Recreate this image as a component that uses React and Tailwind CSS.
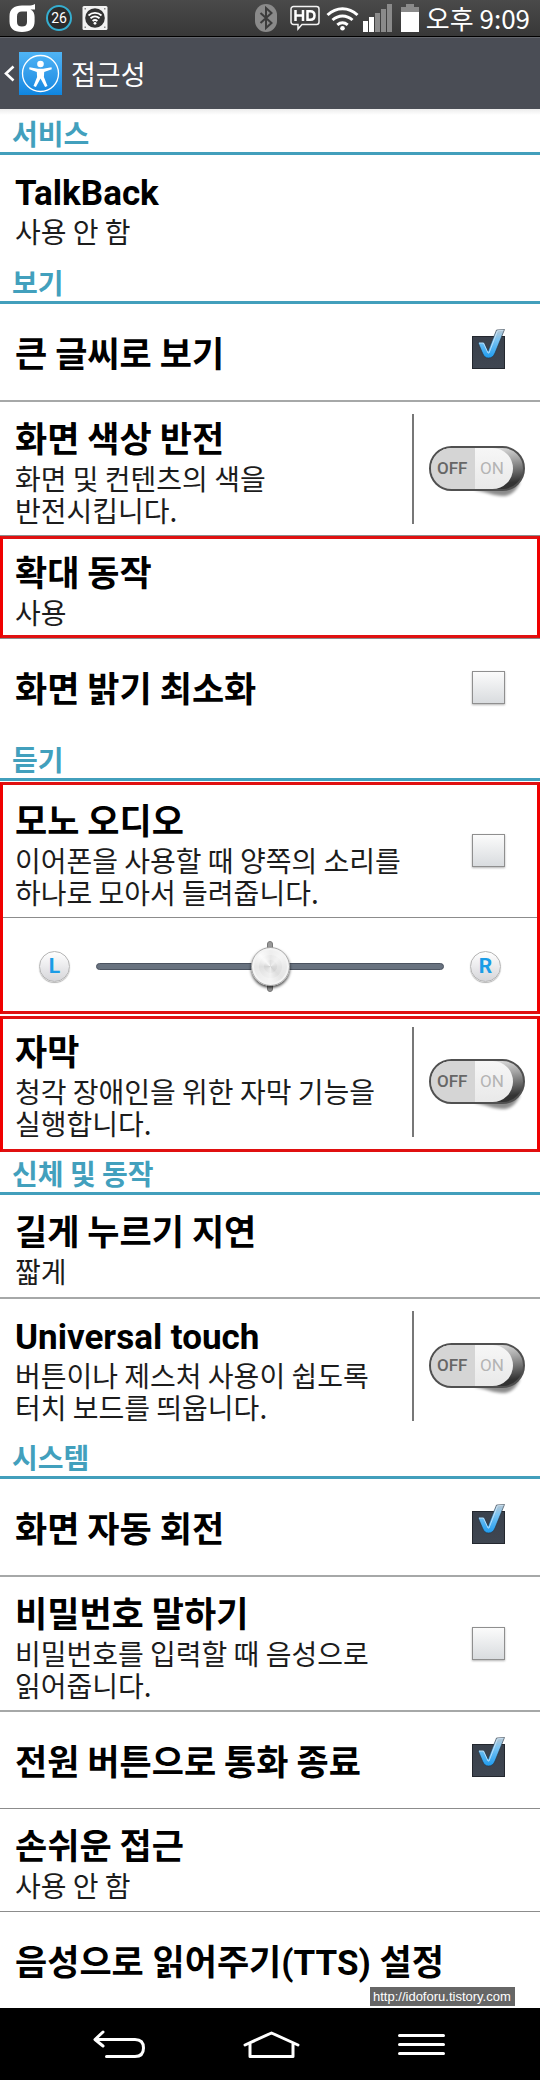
import React, { useId, useState } from 'react';
import clsx from 'clsx';

const SECTIONS = [
	{
		title: '서비스',
		rows: [{ title: 'TalkBack', summary: '사용 안 함', latin: true, divider: 'hidden' }],
	},
	{
		title: '보기',
		rows: [
			{ title: '큰 글씨로 보기', control: 'checkbox', on: true, divider: 'thick' },
			{
				title: '화면 색상 반전',
				summary: '화면 및 컨텐츠의 색을\n반전시킵니다.',
				control: 'switch',
				divider: 'thin',
			},
			{ title: '확대 동작', summary: '사용', divider: 'thin', highlight: 'top-0 bottom-px' },
			{ title: '화면 밝기 최소화', control: 'checkbox' },
		],
	},
	{
		title: '듣기',
		rows: [
			{
				title: '모노 오디오',
				summary: '이어폰을 사용할 때 양쪽의 소리를\n하나로 모아서 들려줍니다.',
				control: 'checkbox',
				divider: 'thin',
				highlight: 'inset-y-px',
				balance: true,
			},
			{
				title: '자막',
				summary: '청각 장애인을 위한 자막 기능을\n실행합니다.',
				control: 'switch',
				divider: 'hidden',
				highlight: 'top-px -bottom-[3px]',
			},
		],
	},
	{
		title: '신체 및 동작',
		rows: [
			{ title: '길게 누르기 지연', summary: '짧게', divider: 'thick' },
			{
				title: 'Universal touch',
				summary: '버튼이나 제스처 사용이 쉽도록\n터치 보드를 띄웁니다.',
				latin: true,
				control: 'switch',
				divider: 'hidden',
			},
		],
	},
	{
		title: '시스템',
		rows: [
			{ title: '화면 자동 회전', control: 'checkbox', on: true, divider: 'thick' },
			{
				title: '비밀번호 말하기',
				summary: '비밀번호를 입력할 때 음성으로\n읽어줍니다.',
				control: 'checkbox',
				divider: 'thick',
			},
			{ title: '전원 버튼으로 통화 종료', control: 'checkbox', on: true, divider: 'thin' },
			{ title: '손쉬운 접근', summary: '사용 안 함', divider: 'thin' },
			{ title: '음성으로 읽어주기(TTS) 설정', latin: true },
		],
	},
];

const DIVIDERS = {
	hidden: 'border-b border-transparent',
	thin: 'border-b border-[#8c8c8c]',
	thick: 'border-b-2 border-[#a6a8a8]',
};

// indexed by the number of summary lines
const HEIGHTS = ['min-h-[96px]', 'min-h-[102px]', 'min-h-[133px]'];

const StatusBar = () => (
	<div className="flex h-[37px] items-center border-b border-black bg-linear-to-b from-[#4a4a4a] to-[#383838] pr-[10px] pl-[9px] text-white">
		<svg className="h-[28px] w-[26px]" viewBox="0 0 26 28" fill="none">
			<path
				d="M26 0v5.500h-4.500c3 1.500 4.100 4.300 4.100 7.500v4.500C25.600 24 21.500 28 13 28S.5 24 .5 17.500v-5C.5 5 5 1.500 13 1.500h6c3 0 5-.5 7-1.500zM13 7.500c-3.300 0-5 1.800-5 5v5.500c0 3.200 1.700 4.500 5 4.500s5-1.300 5-4.500V7.500z"
				fill="#fff"
				fillRule="evenodd"
			/>
		</svg>
		<span className="ml-[11px] grid size-[26px] place-items-center rounded-full border-2 border-[#35aed0] bg-[#2b2b2b] font-['Roboto',sans-serif] text-[14px] leading-none">
			26
		</span>
		<svg className="ml-[10px] size-[26px]" viewBox="0 0 26 26" fill="none">
			<rect x="0.500" y="1" width="25" height="24" rx="1.500" fill="#f2f2f2" />
			<circle cx="13" cy="13" r="9.800" fill="#333" />
			<path d="M6.500 10.500c3.800-3.400 9.200-3.400 13 0M8.500 13.300c2.700-2.300 6.300-2.300 9 0M10.600 16c1.500-1.200 3.300-1.200 4.800 0" stroke="#fff" strokeWidth="1.800" />
			<circle cx="13" cy="18.300" r="1.400" fill="#fff" />
			<path d="M2.500 3h1.500v1.500h-1.500zM22 3h1.500v1.500H22zM2.500 21.500h1.500V23h-1.500zM22 21.500h1.500V23H22z" fill="#888" />
		</svg>

		<div className="ml-auto flex items-center">
			<svg className="h-[28px] w-[22px]" viewBox="0 0 22 28" fill="none">
				<rect width="22" height="28" rx="11" fill="#8a8a8a" />
				<path d="M5.500 9l11 10L11 24V4l5.500 5-11 10" stroke="#3c3c3c" strokeWidth="2" />
			</svg>
			<svg className="ml-[13px] h-[26px] w-[30px]" viewBox="0 0 30 26" fill="none">
				<path
					d="M3.500 1.500h23a2.500 2.500 0 0 1 2.500 2.500v13a2.500 2.500 0 0 1-2.500 2.500H12L8 24v-4.500H3.500A2.500 2.500 0 0 1 1 17V4a2.500 2.500 0 0 1 2.500-2.500z"
					stroke="#f4f4f4"
					strokeWidth="1.500"
				/>
				<path d="M5.500 5v11M13 5v11M5.500 10.500H13M17.500 6.200v8.600h2.800c2.600 0 4.200-1.500 4.200-4.300s-1.600-4.300-4.200-4.300z" stroke="#fff" strokeWidth="2.500" />
			</svg>
			<svg className="ml-[6px] h-[26px] w-[33px]" viewBox="0 0 33 26" fill="none">
				<path d="M1.500 10c9-8.500 21-8.500 30 0M6.500 15c6-5.500 14-5.500 20 0M11.300 19.800c3.200-2.600 7.200-2.600 10.400 0" stroke="#fff" strokeWidth="3" />
				<circle cx="16.500" cy="23.300" r="2.300" fill="#fff" />
			</svg>
			<svg className="ml-[4px] h-[28px] w-[29px]" viewBox="0 0 29 28">
				<path d="M0 17h5v11H0zM6 13h5v15H6z" fill="#fff" />
				<path d="M12 9h5v19h-5zM18 5h5v23h-5zM24 0h5v28h-5z" fill="#8a8a8a" />
			</svg>
			<svg className="ml-[9px] h-[28px] w-[18px]" viewBox="0 0 18 28">
				<path d="M5 0h8v3h5v5H0V3h5z" fill="#8a8a8a" />
				<path d="M0 8h18v20H0z" fill="#fff" />
			</svg>
			<span className="ml-[7px] text-[26px] leading-[36px]">오후 9:09</span>
		</div>
	</div>
);

const Header = () => (
	<header className="flex h-[72px] items-center border-t border-[#63666c] bg-[#4a4d55] pl-[4px] text-white">
		<button type="button" aria-label="뒤로" className="flex items-center">
			<svg className="h-[17px] w-[11px]" viewBox="0 0 11 17" fill="none">
				<path d="M9.500 1.500l-7.500 7 7.500 7" stroke="#fff" strokeWidth="2.600" />
			</svg>
			<span className="ml-[4px] grid size-[43px] place-items-center bg-linear-to-b from-[#4fb4f5] to-[#0d86e0]">
				<svg className="size-[39px]" viewBox="0 0 39 39" fill="none">
					<circle cx="19.500" cy="19.500" r="18" stroke="#fff" strokeWidth="1.300" />
					<circle cx="19.500" cy="10" r="3.300" fill="#fff" />
					<path
						d="M8.500 13.200l8.500 1.500h5l8.500-1.500.3 2-7.600 2.800-.3 5 3.600 9-2.400 1-4.600-8.500-4.600 8.500-2.400-1 3.600-9-.3-5-7.600-2.800z"
						fill="#fff"
					/>
				</svg>
			</span>
		</button>
		<h1 className="ml-[9px] text-[27px] leading-8">접근성</h1>
	</header>
);

const Checkbox = ({ id, defaultChecked }) => (
	<span className="relative mr-[35px] size-[33px] shrink-0">
		<input
			id={id}
			type="checkbox"
			defaultChecked={defaultChecked}
			className="peer block size-[33px] appearance-none border border-[#8f8f8f] bg-linear-to-b from-[#fbfbfb] to-[#d9dcdf] shadow-[0_1px_2px_rgba(0,0,0,0.3)] checked:border-[#23272e] checked:from-[#3a414c] checked:to-[#3f4651] checked:shadow-none"
		/>
		<svg className="pointer-events-none absolute -top-[7px] left-[5px] hidden h-[31px] w-[28px] peer-checked:block" viewBox="0 0 28 31">
			<defs>
				<linearGradient id={`${id}-tick`} x1="0" y1="0" x2="0" y2="1">
					<stop offset="0" stopColor="#b9c6d0" />
					<stop offset="0.350" stopColor="#7cc4f2" />
					<stop offset="1" stopColor="#1e9cf0" />
				</linearGradient>
			</defs>
			<path
				d="M1 13.500h6l4 8.500L19.500 1l8-.5L18 24c-1.500 3.500-3.500 5-6.500 5s-4.500-1.500-6-5z"
				fill={`url(#${id}-tick)`}
				stroke="#24303f"
				strokeWidth="0.600"
			/>
			<path d="M2 14h4.500l4.500 10h1L20.500 1.800l6-.5" fill="none" stroke="#cfe9fb" strokeWidth="0.800" />
		</svg>
	</span>
);

const Switch = ({ id, labelledBy }) => {
	const [isOn, setIsOn] = useState(false);

	return (
		<div className="flex h-[110px] items-center border-l-2 border-[#777] pr-[15px] pl-[15px]">
			<button
				type="button"
				role="switch"
				aria-checked={isOn}
				aria-labelledby={labelledBy}
				onClick={() => setIsOn(!isOn)}
				className="relative flex h-[45px] w-[96px] items-center pl-[8px] font-['Roboto',sans-serif] text-[17px]"
			>
				<svg className="absolute top-0 left-0 h-[53px] w-[96px]" viewBox="0 0 96 53" fill="none">
					<defs>
						<linearGradient id={`${id}-side`} x1="0" y1="0" x2="0.300" y2="1">
							<stop offset="0.100" stopColor="#f0f0f0" />
							<stop offset="0.500" stopColor="#a5a5a5" />
							<stop offset="1" stopColor="#333" />
						</linearGradient>
						<linearGradient id={`${id}-face`} x1="0" y1="0" x2="0" y2="1">
							<stop offset="0" stopColor="#f7f7f7" />
							<stop offset="1" stopColor="#e8e8e8" />
						</linearGradient>
						<clipPath id={`${id}-clip`}>
							<rect x="2" y="2" width="82" height="41" rx="20.500" />
						</clipPath>
						<filter id={`${id}-blur`} x="-20%" y="-50%" width="140%" height="200%">
							<feGaussianBlur stdDeviation="1.500" />
						</filter>
					</defs>
					<path d="M45 44l40-12 6 4c-3 8-9 14-17 14-9 0-16-4-29-6z" fill="#000" opacity="0.450" filter={`url(#${id}-blur)`} />
					<rect x="1" y="1" width="94" height="43" rx="21.500" fill={`url(#${id}-side)`} stroke="#505050" strokeWidth="2" />
					<g clipPath={`url(#${id}-clip)`}>
						<path d="M0 0h46v46H0z" fill="#d5d5d5" />
						<path d="M46 0h50v46H46z" fill={`url(#${id}-face)`} />
					</g>
				</svg>
				<span className="relative w-[43px] text-left font-medium text-[#666]">OFF</span>
				<span className="relative text-[#b4b4b4]">ON</span>
			</button>
		</div>
	);
};

const Row = ({ title, summary, latin, control, on, divider }) => {
	const id = useId();
	const lineCount = summary ? summary.split('\n').length : 0;

	return (
		<div className={clsx('box-content flex items-center', HEIGHTS[lineCount], divider && DIVIDERS[divider])}>
			<label id={`${id}-label`} htmlFor={control === 'checkbox' ? id : undefined} className="min-w-0 flex-1 pl-[15px]">
				<span className="block text-[35px] leading-[50px] font-bold whitespace-nowrap text-black">
					<span className={clsx('leading-none', latin && "font-['Roboto','Noto_Sans_CJK_KR',sans-serif]")}>{title}</span>
				</span>
				{summary && <span className="block text-[28px] leading-8 whitespace-pre text-[#1c1c1c]">{summary}</span>}
			</label>
			{control === 'checkbox' && <Checkbox id={id} defaultChecked={on} />}
			{control === 'switch' && <Switch id={id} labelledBy={`${id}-label`} />}
		</div>
	);
};

const Channel = ({ children }) => (
	<span className="grid size-[31px] shrink-0 place-items-center rounded-full border border-[#b5b5b5] bg-linear-to-b from-white to-[#d6d6da] font-['Roboto',sans-serif] text-[21px] leading-none font-bold text-[#1b9ce6] shadow-[0_1px_1px_rgba(0,0,0,0.3)]">
		{children}
	</span>
);

const BalanceSlider = () => (
	<div className="flex h-[97px] items-center gap-[26px] px-[39px]">
		<Channel>L</Channel>
		<div className="relative flex flex-1 items-center justify-center">
			<span className="absolute h-[51px] w-[6px] rounded-full border border-[#777] bg-[#999]" />
			<input
				type="range"
				aria-label="좌우 균형"
				defaultValue={50}
				className="relative h-[40px] w-full appearance-none bg-transparent [&::-webkit-slider-runnable-track]:h-[7px] [&::-webkit-slider-runnable-track]:rounded-full [&::-webkit-slider-runnable-track]:border [&::-webkit-slider-runnable-track]:border-[#4b5360] [&::-webkit-slider-runnable-track]:bg-[#68727f] [&::-webkit-slider-thumb]:-mt-[17px] [&::-webkit-slider-thumb]:size-[39px] [&::-webkit-slider-thumb]:appearance-none [&::-webkit-slider-thumb]:rounded-full [&::-webkit-slider-thumb]:border [&::-webkit-slider-thumb]:border-[#a8a8a8] [&::-webkit-slider-thumb]:bg-[conic-gradient(#e0e0e0,#eeeeee_12%,#dadada_25%,#d2d2d2_38%,#ededed_50%,#e2e2e2_62%,#d4d4d4_75%,#f8f8f8_88%,#e0e0e0)] [&::-webkit-slider-thumb]:shadow-[0_2px_3px_rgba(0,0,0,0.7),inset_0_0_0_2px_#f4f4f4,inset_0_0_0_7px_rgba(255,255,255,0.25),inset_0_0_0_12px_rgba(255,255,255,0.25)]"
			/>
		</div>
		<Channel>R</Channel>
	</div>
);

const Highlight = ({ className, children }) => (
	<div className="relative">
		{children}
		<div
			className={clsx(
				'pointer-events-none absolute inset-x-0 z-10 border-[3px] border-x-[#f00000] border-y-[#e01010]',
				className
			)}
		/>
	</div>
);

const NavBar = () => (
	<nav className="flex h-[72px] items-center justify-between bg-black pr-[95px] pl-[93px]">
		<button type="button" aria-label="뒤로">
			<svg className="h-[29px] w-[52px]" viewBox="0 0 52 29" fill="none" stroke="#fff" strokeWidth="3" strokeLinecap="round" strokeLinejoin="round">
				<path d="M10 2L2 9.500 10 16M2.500 9.500H42c6 0 8.500 3 8.500 8.500S48 26.500 42 26.500H13.500" />
			</svg>
		</button>
		<button type="button" aria-label="홈">
			<svg className="h-[29px] w-[57px]" viewBox="0 0 57 29" fill="none" stroke="#fff" strokeWidth="3" strokeLinecap="round" strokeLinejoin="round">
				<path d="M2 15L28.500 3 55 15M7 14v12.500h43V14" />
			</svg>
		</button>
		<button type="button" aria-label="메뉴">
			<svg className="h-[29px] w-[47px]" viewBox="0 0 47 29" fill="none" stroke="#fff" strokeWidth="3" strokeLinecap="round">
				<path d="M1.500 5.500h44M1.500 14.500h44M1.500 23.500h44" />
			</svg>
		</button>
	</nav>
);

const App = () => (
	<div className="bg-white font-['Noto_Sans_CJK_KR',sans-serif]">
		<StatusBar />
		<Header />
		<main className="relative bg-linear-to-b from-[#ececec] to-white to-[6px]">
			{SECTIONS.map((section) => (
				<section key={section.title}>
					<h2 className="h-[46px] border-b-3 border-[#429fbc] pl-[12px] text-[28px] leading-[48px] font-bold text-[#42a0bd]">
						{section.title}
					</h2>
					{section.rows.map(({ highlight, balance, ...row }) =>
						highlight ? (
							<Highlight key={row.title} className={highlight}>
								{balance && <div className="h-[3px]" />}
								<Row {...row} />
								{balance && <BalanceSlider />}
							</Highlight>
						) : (
							<Row key={row.title} {...row} />
						)
					)}
				</section>
			))}
			<a
				href="http://idoforu.tistory.com"
				className="absolute right-[25px] bottom-[2px] flex h-[19px] w-[145px] items-center bg-[#666] pl-[3px] font-['Liberation_Sans',sans-serif] text-[13px] leading-none text-white"
			>
				http://idoforu.tistory.com
			</a>
		</main>
		<NavBar />
	</div>
);

export default App;
